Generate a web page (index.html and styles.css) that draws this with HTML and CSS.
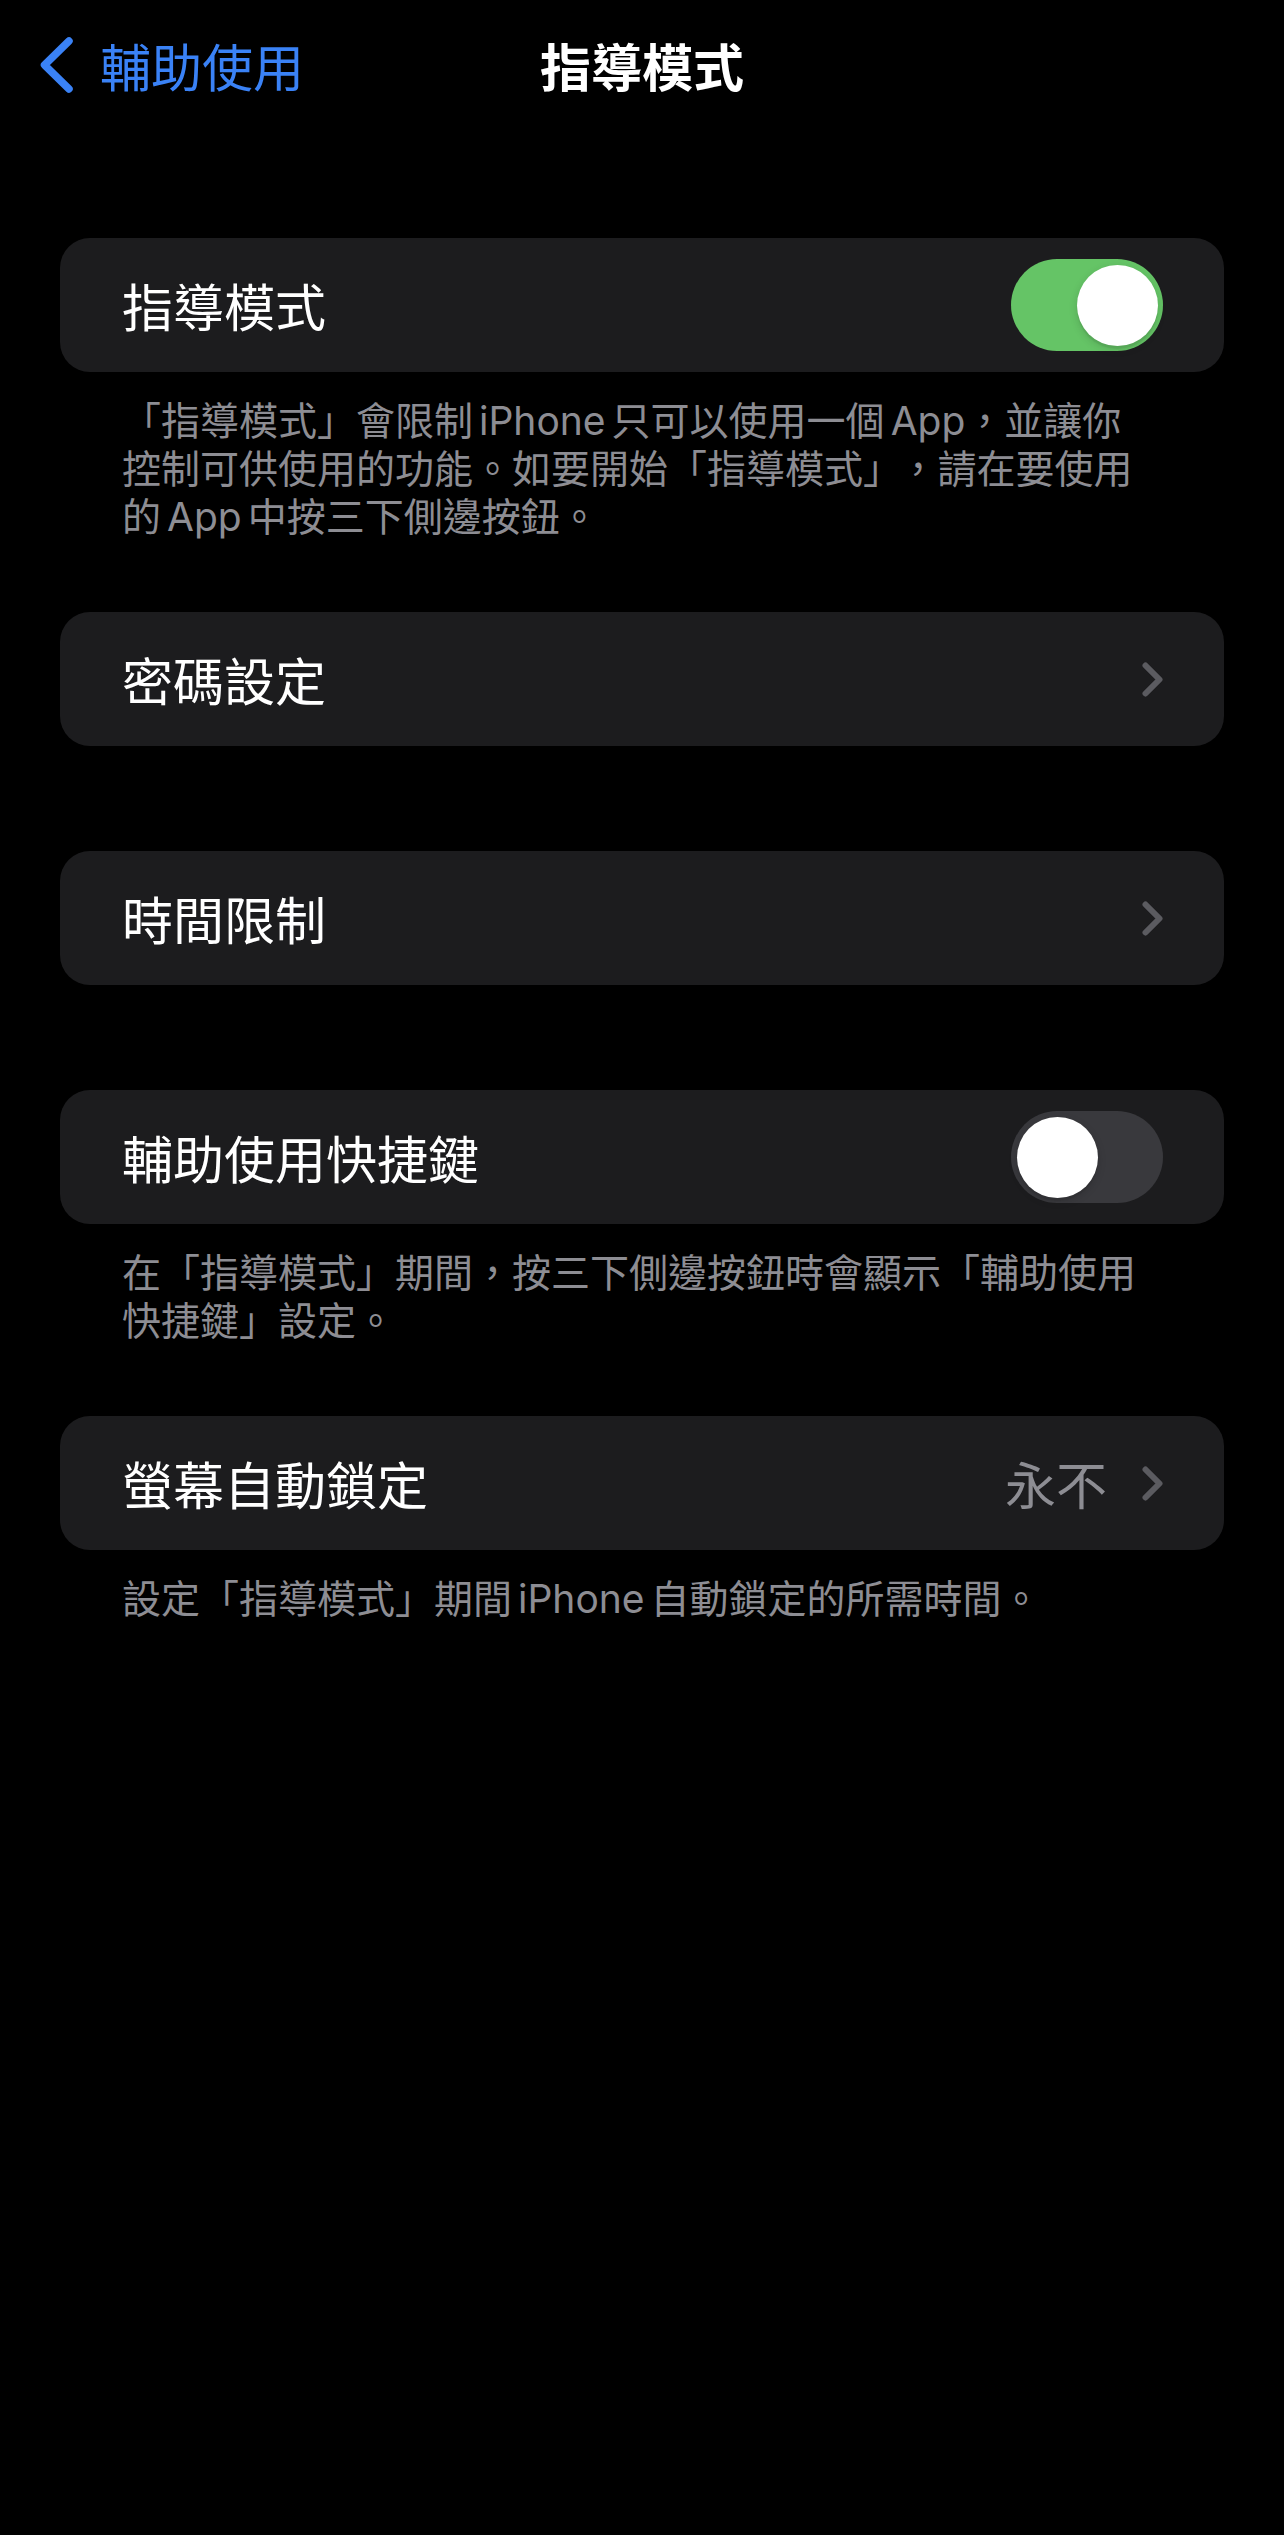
FILE: index.html
```html
<!DOCTYPE html>
<html lang="zh-Hant">
<head>
<meta charset="utf-8">
<title>指導模式</title>
<link rel="stylesheet" href="styles.css">
</head>
<body>
<div class="screen">
  <header class="nav">
    <div class="nav-left">
      <svg class="back-chevron" viewBox="0 0 33 56" width="33" height="56"><path d="M29 4 L4.5 28 L29 52" /></svg>
      <span class="back-label">輔助使用</span>
    </div>
    <h1 class="nav-title">指導模式</h1>
    <div class="nav-right"></div>
  </header>

  <main class="list">
    <section class="section">
      <div class="card">
        <span class="label">指導模式</span>
        <span class="switch on"><span class="knob"></span></span>
      </div>
      <p class="footer">「指導模式」會限制<span class="en">iPhone</span>只可以使用一個<span class="en tight">App</span>，並讓你<br>控制可供使用的功能。如要開始「指導模式」<span class="wide">，</span>請在要使用<br>的<span class="en">App</span>中按三下側邊按鈕。</p>
    </section>

    <section class="section bare">
      <div class="card">
        <span class="label">密碼設定</span>
        <span class="accessory">
          <svg class="chevron" viewBox="0 0 21 35" width="21" height="35"><path d="M3.5 3.5 L17.5 17.5 L3.5 31.5" /></svg>
        </span>
      </div>
    </section>

    <section class="section bare">
      <div class="card">
        <span class="label">時間限制</span>
        <span class="accessory">
          <svg class="chevron" viewBox="0 0 21 35" width="21" height="35"><path d="M3.5 3.5 L17.5 17.5 L3.5 31.5" /></svg>
        </span>
      </div>
    </section>

    <section class="section">
      <div class="card">
        <span class="label">輔助使用快捷鍵</span>
        <span class="switch off"><span class="knob"></span></span>
      </div>
      <p class="footer">在「指導模式」期間，按三下側邊按鈕時會顯示「輔助使用<br>快捷鍵」設定。</p>
    </section>

    <section class="section">
      <div class="card">
        <span class="label">螢幕自動鎖定</span>
        <span class="accessory">
          <span class="value">永不</span>
          <svg class="chevron" viewBox="0 0 21 35" width="21" height="35"><path d="M3.5 3.5 L17.5 17.5 L3.5 31.5" /></svg>
        </span>
      </div>
      <p class="footer">設定「指導模式」期間<span class="en">iPhone</span>自動鎖定的所需時間。</p>
    </section>
  </main>
</div>
</body>
</html>
```
FILE: styles.css
```css
html, body {
  margin: 0;
  padding: 0;
  background: #000;
}

body {
  font-family: Inter, "Noto Sans CJK TC", "Noto Sans", sans-serif;
  color: #fff;
  width: 1284px;
  min-height: 2535px;
}

.screen {
  display: flex;
  flex-direction: column;
}

.nav {
  display: grid;
  grid-template-columns: 1fr auto 1fr;
  align-items: center;
  height: 130px;
  padding: 0 40px;
}

.nav-left {
  display: flex;
  align-items: center;
  gap: 27px;
}

.back-chevron path {
  fill: none;
  stroke: #3a82f6;
  stroke-width: 7.5;
  stroke-linecap: round;
  stroke-linejoin: round;
}

.back-label {
  font-size: 51px;
  line-height: 60px;
  color: #3a82f6;
  font-family: "Noto Sans CJK TC", sans-serif;
}

.nav-title {
  margin: 0;
  font-size: 51px;
  line-height: 60px;
  font-weight: 700;
  font-family: "Noto Sans CJK TC", sans-serif;
  color: #fff;
}

.list {
  padding: 108px 60px 0;
  display: flex;
  flex-direction: column;
}

.section + .section {
  margin-top: 71px;
}

.section.bare {
  padding-bottom: 34px;
}

.card {
  height: 134px;
  background: #1c1c1e;
  border-radius: 30px;
  display: flex;
  align-items: center;
  justify-content: space-between;
  padding: 0 61px 0 62px;
}

.label {
  font-family: "Noto Sans CJK TC", sans-serif;
  font-size: 51px;
  line-height: 60px;
  color: #fff;
  font-weight: 400;
}

.accessory {
  display: flex;
  align-items: center;
  gap: 35px;
}

.value {
  font-family: "Noto Sans CJK TC", sans-serif;
  font-size: 51px;
  line-height: 60px;
  color: #8d8d93;
}

.chevron {
  display: block;
}

.chevron path {
  fill: none;
  stroke: #5b5b60;
  stroke-width: 6;
  stroke-linecap: round;
  stroke-linejoin: round;
}

.switch {
  position: relative;
  width: 152px;
  height: 92px;
  border-radius: 46px;
  flex-shrink: 0;
}

.switch.on {
  background: #65c466;
}

.switch.off {
  background: #39393d;
}

.knob {
  position: absolute;
  top: 5.5px;
  width: 81px;
  height: 81px;
  border-radius: 50%;
  background: #fff;
  box-shadow: 0 3px 8px rgba(0, 0, 0, 0.15), 0 3px 1px rgba(0, 0, 0, 0.06);
}

.switch.on .knob {
  right: 5.5px;
}

.switch.off .knob {
  left: 5.5px;
}

.footer {
  margin: 0;
  padding: 25px 62px 0;
  font-size: 39px;
  line-height: 48px;
  color: #8d8d93;
  white-space: nowrap;
}

.en {
  margin: 0 6px;
}

.en.tight {
  margin-right: 0;
}

.wide {
  margin-left: 16px;
}
```
